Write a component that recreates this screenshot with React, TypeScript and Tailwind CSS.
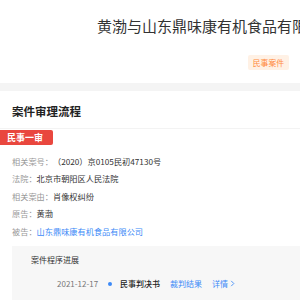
const font = { fontFamily: '"Noto Sans CJK SC", "Noto Sans", sans-serif' };

function InfoRow({ label, value, link = false }: { label: string; value: string; link?: boolean }) {
  return (
    <div className="flex h-[17.5px] items-center whitespace-nowrap text-[8.2px]">
      <span className="text-[#999]">{label}：</span>
      <span className={link ? "text-[#3d8af7]" : "text-[#333]"}>{value}</span>
    </div>
  );
}

export default function App() {
  return (
    <div className="h-[300px] w-[300px] overflow-hidden bg-white" style={font}>
      {/* header */}
      <div className="pb-[13px] pt-[16px]">
        <div className="whitespace-nowrap pl-[97px] text-[15px] leading-[20px] text-[#333]">
          黄渤与山东鼎味康有机食品有限公司肖像权纠纷
        </div>
        <div className="mt-[19px] flex justify-end pr-[11px]">
          <span className="flex h-[15px] items-center rounded-[2px] bg-[#fff1e5] px-[5px] text-[7.8px] text-[#ff8a3d]">
            民事案件
          </span>
        </div>
      </div>
      <div className="h-[8px] bg-[#f4f4f4]" />

      {/* process */}
      <div className="pt-[12px]">
        <div className="pl-[12px] text-[11.5px] font-bold leading-[16px] text-[#222]">案件审理流程</div>
        <div className="mt-[9px] h-px bg-[#f3f3f3]" />
        <div className="mt-px flex h-[15px] w-[53px] items-center rounded-r-[2px] bg-[#e9473e] pl-[7px] text-[9px] font-bold text-white">
          民事一审
        </div>
        <div className="mt-[7px] pl-[12px]">
          <InfoRow label="相关案号" value="（2020）京0105民初47130号" />
          <InfoRow label="法院" value="北京市朝阳区人民法院" />
          <InfoRow label="相关案由" value="肖像权纠纷" />
          <InfoRow label="原告" value="黄渤" />
          <InfoRow label="被告" value="山东鼎味康有机食品有限公司" link />
        </div>
        <div className="ml-[12px] mt-[6px] h-[80px] bg-[#f7f7f7] pt-[8px]">
          <div className="pl-[19px] text-[8px] leading-[12px] text-[#333]">案件程序进展</div>
          <div className="mt-[12px] flex h-[12px] items-center whitespace-nowrap pl-[45px] text-[8px]">
            <span className="text-[#777]">2021-12-17</span>
            <span className="ml-[10px] h-[4px] w-[4px] rounded-full bg-[#3d8af7]" />
            <span className="ml-[8px] font-medium text-[#222]">民事判决书</span>
            <span className="ml-[10px] text-[#3d8af7]">裁判结果</span>
            <span className="ml-[10px] flex items-center text-[#3d8af7]">
              详情
              <svg className="ml-[2px] h-[7px] w-[5px]" viewBox="0 0 5 8" fill="none" stroke="currentColor" strokeWidth="1">
                <path d="M1 1l3 3-3 3" />
              </svg>
            </span>
          </div>
        </div>
      </div>
    </div>
  );
}
